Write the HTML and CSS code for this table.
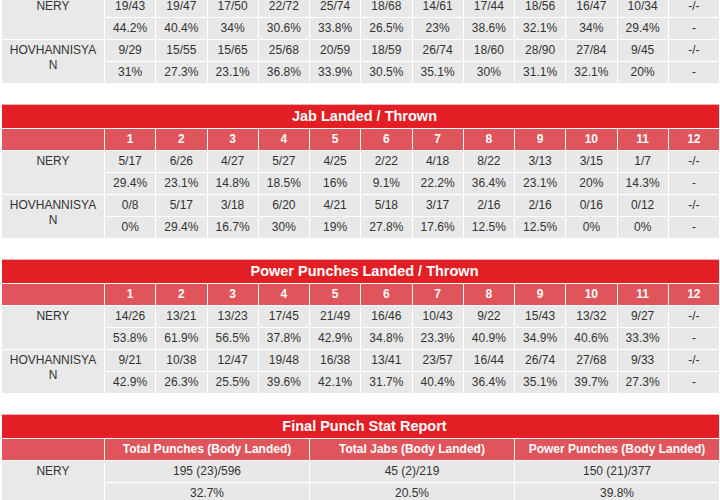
FILE: index.html
```html
<!DOCTYPE html>
<html lang="en">
<head>
<meta charset="utf-8">
<title>Punch Stats</title>
<link rel="stylesheet" href="styles.css">
</head>
<body>
<div class="stats">
  <table class="stat stat--cut">
    <colgroup><col class="c-name"><col span="12"></colgroup>
    <tbody>
      <tr><td class="name" rowspan="2">NERY</td><td>19/43</td><td>19/47</td><td>17/50</td><td>22/72</td><td>25/74</td><td>18/68</td><td>14/61</td><td>17/44</td><td>18/56</td><td>16/47</td><td>10/34</td><td>-/-</td></tr>
      <tr><td>44.2%</td><td>40.4%</td><td>34%</td><td>30.6%</td><td>33.8%</td><td>26.5%</td><td>23%</td><td>38.6%</td><td>32.1%</td><td>34%</td><td>29.4%</td><td>-</td></tr>
      <tr><td class="name" rowspan="2">HOVHANNISYAN</td><td>9/29</td><td>15/55</td><td>15/65</td><td>25/68</td><td>20/59</td><td>18/59</td><td>26/74</td><td>18/60</td><td>28/90</td><td>27/84</td><td>9/45</td><td>-/-</td></tr>
      <tr><td>31%</td><td>27.3%</td><td>23.1%</td><td>36.8%</td><td>33.9%</td><td>30.5%</td><td>35.1%</td><td>30%</td><td>31.1%</td><td>32.1%</td><td>20%</td><td>-</td></tr>
    </tbody>
  </table>

  <table class="stat">
    <colgroup><col class="c-name"><col span="12"></colgroup>
    <thead>
      <tr><th class="title" colspan="13">Jab Landed / Thrown</th></tr>
      <tr class="head"><th></th><th>1</th><th>2</th><th>3</th><th>4</th><th>5</th><th>6</th><th>7</th><th>8</th><th>9</th><th>10</th><th>11</th><th>12</th></tr>
    </thead>
    <tbody>
      <tr><td class="name" rowspan="2">NERY</td><td>5/17</td><td>6/26</td><td>4/27</td><td>5/27</td><td>4/25</td><td>2/22</td><td>4/18</td><td>8/22</td><td>3/13</td><td>3/15</td><td>1/7</td><td>-/-</td></tr>
      <tr><td>29.4%</td><td>23.1%</td><td>14.8%</td><td>18.5%</td><td>16%</td><td>9.1%</td><td>22.2%</td><td>36.4%</td><td>23.1%</td><td>20%</td><td>14.3%</td><td>-</td></tr>
      <tr><td class="name" rowspan="2">HOVHANNISYAN</td><td>0/8</td><td>5/17</td><td>3/18</td><td>6/20</td><td>4/21</td><td>5/18</td><td>3/17</td><td>2/16</td><td>2/16</td><td>0/16</td><td>0/12</td><td>-/-</td></tr>
      <tr><td>0%</td><td>29.4%</td><td>16.7%</td><td>30%</td><td>19%</td><td>27.8%</td><td>17.6%</td><td>12.5%</td><td>12.5%</td><td>0%</td><td>0%</td><td>-</td></tr>
    </tbody>
  </table>

  <table class="stat">
    <colgroup><col class="c-name"><col span="12"></colgroup>
    <thead>
      <tr><th class="title" colspan="13">Power Punches Landed / Thrown</th></tr>
      <tr class="head"><th></th><th>1</th><th>2</th><th>3</th><th>4</th><th>5</th><th>6</th><th>7</th><th>8</th><th>9</th><th>10</th><th>11</th><th>12</th></tr>
    </thead>
    <tbody>
      <tr><td class="name" rowspan="2">NERY</td><td>14/26</td><td>13/21</td><td>13/23</td><td>17/45</td><td>21/49</td><td>16/46</td><td>10/43</td><td>9/22</td><td>15/43</td><td>13/32</td><td>9/27</td><td>-/-</td></tr>
      <tr><td>53.8%</td><td>61.9%</td><td>56.5%</td><td>37.8%</td><td>42.9%</td><td>34.8%</td><td>23.3%</td><td>40.9%</td><td>34.9%</td><td>40.6%</td><td>33.3%</td><td>-</td></tr>
      <tr><td class="name" rowspan="2">HOVHANNISYAN</td><td>9/21</td><td>10/38</td><td>12/47</td><td>19/48</td><td>16/38</td><td>13/41</td><td>23/57</td><td>16/44</td><td>26/74</td><td>27/68</td><td>9/33</td><td>-/-</td></tr>
      <tr><td>42.9%</td><td>26.3%</td><td>25.5%</td><td>39.6%</td><td>42.1%</td><td>31.7%</td><td>40.4%</td><td>36.4%</td><td>35.1%</td><td>39.7%</td><td>27.3%</td><td>-</td></tr>
    </tbody>
  </table>

  <table class="stat">
    <colgroup><col class="c-name"><col span="12"></colgroup>
    <thead>
      <tr><th class="title" colspan="13">Final Punch Stat Report</th></tr>
      <tr class="head"><th></th><th colspan="4">Total Punches (Body Landed)</th><th colspan="4">Total Jabs (Body Landed)</th><th colspan="4">Power Punches (Body Landed)</th></tr>
    </thead>
    <tbody>
      <tr><td class="name" rowspan="2">NERY</td><td colspan="4">195 (23)/596</td><td colspan="4">45 (2)/219</td><td colspan="4">150 (21)/377</td></tr>
      <tr><td colspan="4">32.7%</td><td colspan="4">20.5%</td><td colspan="4">39.8%</td></tr>
    </tbody>
  </table>
</div>
</body>
</html>
```

FILE: styles.css
```css
html, body {
  margin: 0;
  padding: 0;
  overflow: hidden;
  background: #ffffff;
}

body {
  font-family: "Liberation Sans", Arial, Helvetica, sans-serif;
  color: #333333;
}

.stats {
  display: flex;
  flex-direction: column;
  gap: 20px;
  padding-left: 1px;
}

.stat {
  width: 719px;
  table-layout: fixed;
  border-collapse: separate;
  border-spacing: 1px;
  font-size: 12px;
}

.stat--cut {
  margin-top: -5px;
}

.c-name {
  width: 102px;
}

.stat td,
.stat th {
  padding: 0;
  text-align: center;
  white-space: nowrap;
}

.stat td {
  height: 21px;
  line-height: 21px;
  background: #e8e8e8;
}

.stat td.name {
  vertical-align: top;
  white-space: normal;
  word-break: break-all;
  line-height: 15px;
  padding: 3px 4px 0;
  background: #e9e9e9;
}

.stat th.title {
  height: 23px;
  padding-left: 8px;
  background: #e31e25;
  color: #ffffff;
  font-size: 14.5px;
  font-weight: bold;
  line-height: 23px;
  box-shadow: 0 -1px 0 #f3b0b2;
}

.head th {
  height: 21px;
  line-height: 21px;
  background: #e0545b;
  color: #ffffff;
  font-size: 12px;
  font-weight: bold;
}
```
